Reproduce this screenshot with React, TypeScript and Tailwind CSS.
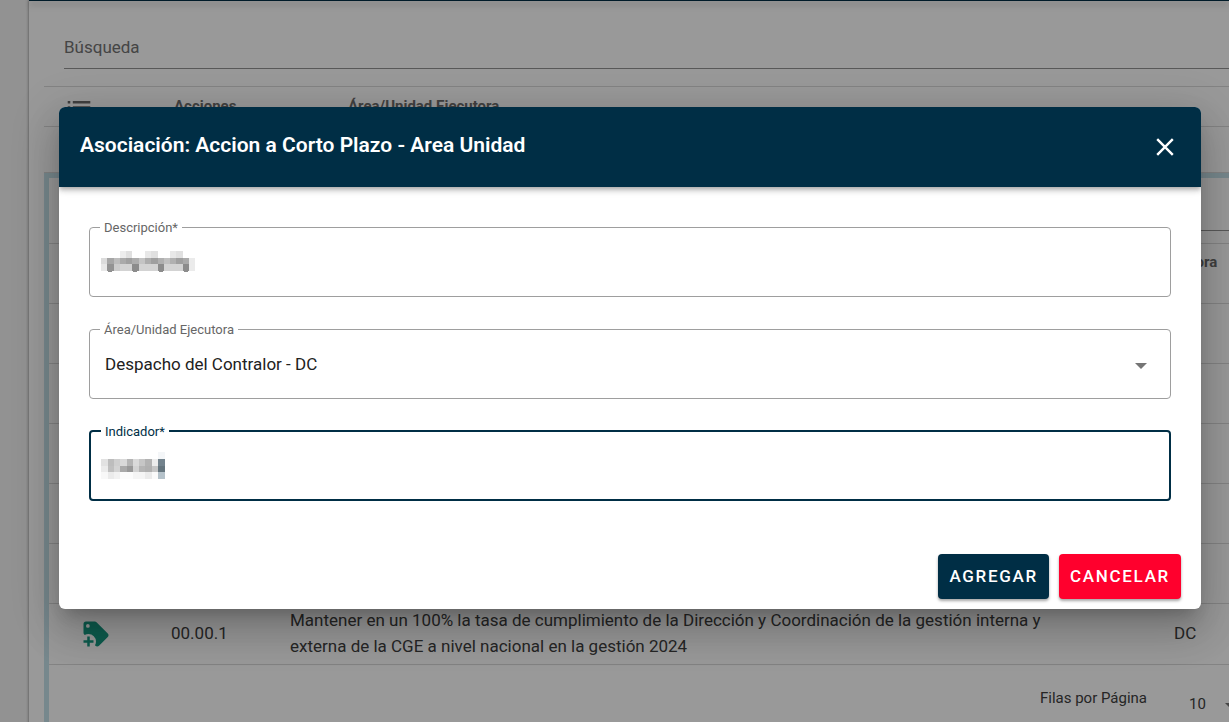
import React from 'react';

type Cell = [x: number, y: number, w: number, h: number, fill: string];

const descripcionCells: Cell[] = [
  [19, 0, 6, 7, '#ededed'], [25, 0, 6, 7, '#e0e0e0'], [44, 0, 6, 7, '#e8e8e8'], [50, 0, 7, 7, '#e0e0e0'], [69, 0, 6, 7, '#e8e8e8'], [75, 0, 7, 7, '#e0e0e0'],
  [0, 7, 6, 6, '#dcdcdc'], [6, 7, 7, 6, '#a6a6a6'], [13, 7, 6, 6, '#bdbdbd'], [19, 7, 6, 6, '#aaaaaa'], [25, 7, 6, 6, '#a0a0a0'],
  [31, 7, 7, 6, '#adadad'], [38, 7, 6, 6, '#c4c4c4'], [44, 7, 6, 6, '#adadad'], [50, 7, 7, 6, '#9f9f9f'], [57, 7, 6, 6, '#b0b0b0'],
  [63, 7, 6, 6, '#c0c0c0'], [69, 7, 6, 6, '#b0b0b0'], [75, 7, 7, 6, '#9f9f9f'], [82, 7, 6, 6, '#aaaaaa'], [88, 7, 6, 6, '#ebebeb'],
  [0, 13, 6, 7, '#e8e8e8'], [6, 13, 7, 7, '#939393'], [13, 13, 6, 7, '#cccccc'], [19, 13, 12, 7, '#d3d3d3'], [31, 13, 7, 7, '#8c8c8c'], [38, 13, 19, 7, '#d3d3d3'],
  [57, 13, 6, 7, '#8c8c8c'], [63, 13, 19, 7, '#d3d3d3'], [82, 13, 6, 7, '#8c8c8c'], [88, 13, 6, 7, '#ebebeb'],
  [7, 20, 4, 1, '#8c8c8c'], [32, 20, 4, 1, '#8c8c8c'], [58, 20, 4, 1, '#8c8c8c'], [83, 20, 4, 1, '#8c8c8c'],
];

const indicadorCells: Cell[] = [
  [57, 0, 7, 7, '#f4f6f8'],
  [0, 7, 7, 7, '#e2e2e2'], [7, 7, 6, 7, '#bdbdbd'], [13, 7, 6, 7, '#cfcfcf'], [19, 7, 7, 7, '#d9d9d9'], [26, 7, 6, 7, '#b5b5b5'],
  [32, 7, 6, 7, '#dadada'], [38, 7, 6, 7, '#c6c6c6'], [44, 7, 7, 7, '#b3b3b3'], [51, 7, 6, 7, '#ececec'], [57, 7, 7, 7, '#73838d'],
  [0, 14, 7, 6, '#ebebeb'], [7, 14, 6, 6, '#c0c0c0'], [13, 14, 6, 6, '#d3d3d3'], [19, 14, 7, 6, '#aaaaaa'], [26, 14, 6, 6, '#999999'],
  [32, 14, 6, 6, '#d3d3d3'], [38, 14, 6, 6, '#b5b5b5'], [44, 14, 7, 6, '#b0b0b0'], [51, 14, 6, 6, '#c6c6c6'], [57, 14, 7, 6, '#65757e'],
  [0, 20, 7, 7, '#f8f8f8'], [7, 20, 6, 7, '#ebebeb'], [13, 20, 6, 7, '#f2f2f2'], [19, 20, 13, 7, '#fcfcfc'], [32, 20, 12, 7, '#f5f5f5'],
  [44, 20, 7, 7, '#ebebeb'], [51, 20, 6, 7, '#fafafa'], [57, 20, 7, 7, '#b5c2ca'],
];

function Redacted({ cells, className }: { cells: Cell[]; className: string }) {
  return (
    <svg width="96" height="28" aria-hidden="true" shapeRendering="crispEdges" className={`pointer-events-none absolute ${className}`}>
      {cells.map(([x, y, w, h, fill]) => (
        <rect key={`${x}-${y}`} x={x} y={y} width={w} height={h} fill={fill} />
      ))}
    </svg>
  );
}

function ListIcon() {
  return (
    <svg width="24" height="24" viewBox="0 0 24 24" fill="#6b6b6b" aria-hidden="true">
      <path d="M0.700 6h2.600v2.600h-2.600zM0.700 11.300h2.600v2.600h-2.600zM0.700 16.600h2.600v2.600h-2.600zM5.800 6h17.500v2.600h-17.500zM5.800 11.300h17.500v2.600h-17.500zM5.800 16.600h17.500v2.600h-17.500z" />
    </svg>
  );
}

function TagPlusIcon() {
  return (
    <svg width="30" height="30" viewBox="0 0 24 24" fill="#169a83" aria-hidden="true">
      <path d="M21.410 11.580L12.410 2.580A2 2 0 0 0 11 2H4A2 2 0 0 0 2 4V11A2 2 0 0 0 2.590 12.420L3 12.820A5.620 5.620 0 0 1 6 12A6 6 0 0 1 12 18A5.620 5.620 0 0 1 11.180 21L11.580 21.400A2 2 0 0 0 13 22A2 2 0 0 0 14.410 21.410L21.410 14.410A2 2 0 0 0 22 13A2 2 0 0 0 21.410 11.580M5.500 7A1.500 1.500 0 1 1 7 5.500A1.500 1.500 0 0 1 5.500 7M10 19H7V22H5V19H2V17H5V14H7V17H10Z" />
    </svg>
  );
}

function Caret({ className }: { className: string }) {
  return (
    <svg width="12" height="6" viewBox="0 0 12 6" fill="#757575" aria-hidden="true" className={className}>
      <path d="M0 0h12L6 6z" />
    </svg>
  );
}

function Page() {
  return (
    <div className="flex bg-[#f4f4f4] pl-[29px]">
      <div className="min-w-0 flex-1 bg-white shadow-[0_0_3px_rgba(0,0,0,0.5)]">
        <header className="h-px bg-[#002e45] shadow-[0_3px_6px_rgba(0,0,0,0.5)]" />
        <div className="pl-[15px]">
          <div className="pl-5 pt-6">
            <input
              aria-label="Búsqueda"
              placeholder="Búsqueda"
              className="block h-11 w-full border-b border-[#949494] bg-transparent text-[17px] outline-none placeholder:text-[#737373]"
            />
          </div>
          <div className="mt-[17px] flex h-[41px] items-center border-y border-[#dadada] text-[15px] font-bold text-[#6b6b6b]">
            <div className="w-[130px] pl-[23px]"><ListIcon /></div>
            <div className="w-[174px]">Acciones</div>
            <div>Área/Unidad Ejecutora</div>
          </div>
          <div className="h-[46px] border-b border-[#dadada]" />
          <div className="border-[5px] border-r-0 border-[#c6e3ec]">
            <div className="flex h-[66px] items-end border-b border-[#dadada] pb-3">
              <div className="ml-5 flex-1 border-b border-[#949494]" />
            </div>
            <table className="w-full table-fixed border-collapse text-[17px] leading-[26px] text-[#404040]">
              <colgroup>
                <col className="w-[110px]" />
                <col className="w-[120px]" />
                <col />
                <col className="w-[163px]" />
              </colgroup>
              <thead>
                <tr className="h-[59px] border-b border-[#dadada] text-[15px] text-[#6b6b6b]">
                  <th />
                  <th className="text-left">Código</th>
                  <th className="text-left">Descripción</th>
                  <th className="whitespace-nowrap pb-[29px] pr-3 pt-0 text-right align-bottom leading-6">Área/Unidad Ejecutora</th>
                </tr>
              </thead>
              <tbody>
                {[1, 2, 3, 4, 5].map((n) => (
                  <tr key={n} className="h-[60px] border-b border-[#dadada]">
                    <td colSpan={4} />
                  </tr>
                ))}
                <tr className="h-[61px] border-b border-[#dadada]">
                  <td className="pl-8"><TagPlusIcon /></td>
                  <td className="pb-0.5 pl-3">00.00.1</td>
                  <td className="pb-0.5 pl-[11px] pr-2">
                    Mantener en un 100% la tasa de cumplimiento de la Dirección y Coordinación de la gestión interna y externa de la CGE a nivel nacional en la gestión 2024
                  </td>
                  <td className="pb-0.5 pl-[108px]">DC</td>
                </tr>
              </tbody>
            </table>
            <div className="flex h-[72px] justify-end pt-5 text-[15px] text-[#404040]">
              <span className="mr-[42px] leading-[26px]">Filas por Página</span>
              <span className="w-9 pt-1.5 leading-[26px]">10</span>
              <Caret className="-mr-2 mt-[18px] shrink-0" />
            </div>
          </div>
        </div>
      </div>
    </div>
  );
}

const fieldBox = 'relative h-[81px] rounded px-[10px]';
const legendText = 'px-1 pt-0.5 text-[13px] leading-5';

function App() {
  return (
    <div className="relative h-screen overflow-hidden font-['Roboto','Liberation_Sans',sans-serif]">
      <Page />
      <div className="absolute inset-0 bg-black/40 pl-[59px] pr-7 pt-[107px]">
        <section
          role="dialog"
          aria-labelledby="dialog-title"
          className="overflow-hidden rounded-md bg-white shadow-[0_11px_15px_-7px_rgba(0,0,0,0.2),0_24px_38px_3px_rgba(0,0,0,0.14),0_9px_46px_8px_rgba(0,0,0,0.12)]"
        >
          <header className="relative flex h-20 items-center justify-between bg-[#002e45] pl-[21px] pr-6 text-white shadow-[0_2px_4px_-1px_rgba(0,0,0,0.2),0_4px_5px_rgba(0,0,0,0.14),0_1px_10px_rgba(0,0,0,0.12)]">
            <h1 id="dialog-title" className="pb-1 text-[21px] font-semibold leading-7">Asociación: Accion a Corto Plazo - Area Unidad</h1>
            <button type="button" aria-label="Cerrar">
              <svg width="24" height="24" viewBox="0 0 24 24" stroke="currentColor" strokeWidth="2.400" aria-hidden="true">
                <path d="M4.200 4.200L19.800 19.800M19.800 4.200L4.200 19.800" />
              </svg>
            </button>
          </header>
          <form className="px-[30px] pt-[29px]">
            <fieldset className={`${fieldBox} border border-[#9e9e9e]`}>
              <legend className={`${legendText} text-[#666666]`}><label htmlFor="descripcion">Descripción*</label></legend>
              <input id="descripcion" className="absolute inset-0 w-full bg-transparent px-4 outline-none" />
              <Redacted cells={descripcionCells} className="left-[11px] top-[13px]" />
            </fieldset>
            <fieldset className={`${fieldBox} mt-[21px] border border-[#9e9e9e]`}>
              <legend className={`${legendText} text-[#666666]`}><label htmlFor="area">Área/Unidad Ejecutora</label></legend>
              <select id="area" className="absolute inset-x-0 top-0 h-[50px] w-full appearance-none bg-transparent px-[15px] text-[17px] text-[#212121] outline-none">
                <option>Despacho del Contralor - DC</option>
              </select>
              <Caret className="pointer-events-none absolute right-[23px] top-[23px]" />
            </fieldset>
            <fieldset className={`${fieldBox} mt-[21px] border-2 border-[#002e45]`}>
              <legend className={`${legendText} text-[#002e45]`}><label htmlFor="indicador">Indicador*</label></legend>
              <input id="indicador" className="absolute inset-0 w-full bg-transparent px-4 outline-none" />
              <Redacted cells={indicadorCells} className="left-[10px] top-[10px]" />
            </fieldset>
          </form>
          <footer className="mt-[53px] flex justify-end gap-[10px] pb-[10px] pr-5 text-[17px] font-medium text-white">
            <button type="button" className="h-[45px] rounded bg-[#002e45] px-[11px] tracking-widest shadow-[0_2px_3px_rgba(0,0,0,0.35)]">AGREGAR</button>
            <button type="button" className="h-[45px] rounded bg-[#ff002d] px-[11px] tracking-widest shadow-[0_2px_3px_rgba(0,0,0,0.35)]">CANCELAR</button>
          </footer>
        </section>
      </div>
    </div>
  );
}

export default App;
